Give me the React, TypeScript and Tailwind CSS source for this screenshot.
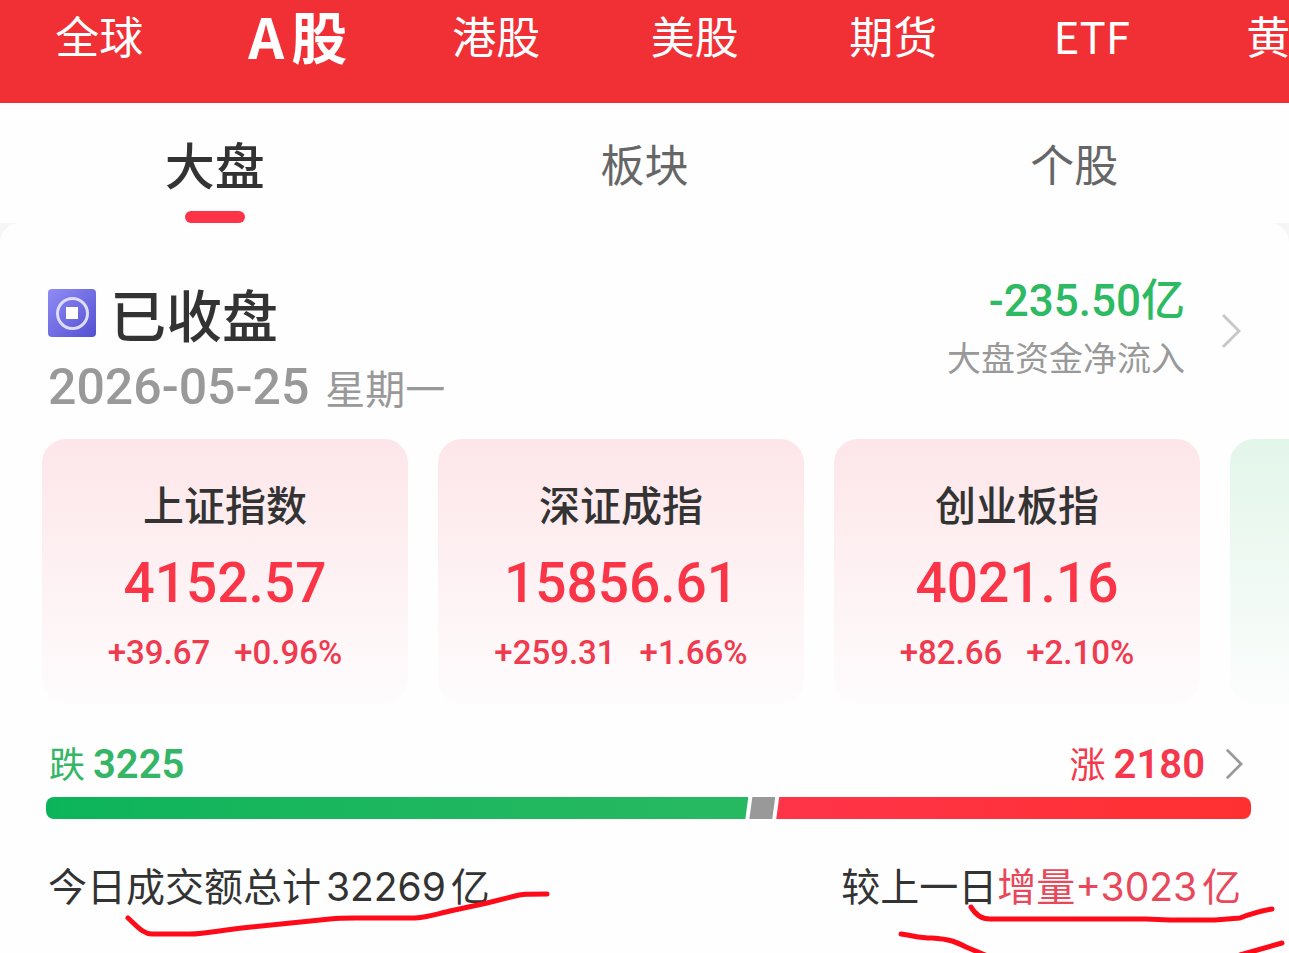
const markets = ['全球', 'A股', '港股', '美股', '期货', 'ETF', '黄金']
const sections = ['大盘', '板块', '个股']

const indices = [
  { name: '上证指数', value: '4152.57', change: '+39.67', percent: '+0.96%' },
  { name: '深证成指', value: '15856.61', change: '+259.31', percent: '+1.66%' },
  { name: '创业板指', value: '4021.16', change: '+82.66', percent: '+2.10%' },
]

const breadth = { down: 3225, flat: 119, up: 2180 }

export default function App() {
  return (
    <div className="relative min-h-screen overflow-hidden bg-[#f6f6f6] font-['Noto_Sans_CJK_SC',sans-serif] text-[#333] [text-autospace:normal]">
      <MarketNav />
      <SectionTabs />
      <main className="rounded-t-[20px] bg-[#fefefe] pt-14 pb-20">
        <Summary />
        <IndexCards />
        <Breadth />
        <Turnover />
      </main>
    </div>
  )
}

function MarketNav() {
  return (
    <nav className="flex overflow-hidden bg-[#f03035] pb-[33px] text-white">
      {markets.map((m) => (
        <button
          key={m}
          className={
            m === 'A股'
              ? 'h-[70px] w-[15.4%] shrink-0 text-[56px] leading-none font-bold whitespace-nowrap'
              : 'h-[70px] w-[15.4%] shrink-0 text-[44px] leading-none font-normal whitespace-nowrap'
          }
        >
          {m}
        </button>
      ))}
    </nav>
  )
}

function SectionTabs() {
  return (
    <nav className="grid grid-cols-3 bg-[#fefefe] pt-3">
      {sections.map((s, i) => (
        <button key={s} className="flex flex-col items-center">
          <span
            className={
              i === 0
                ? 'flex h-24 items-center text-[50px] font-medium'
                : 'flex h-24 items-center text-[44px] text-[#666]'
            }
          >
            {s}
          </span>
          {i === 0 && <span className="h-3 w-[60px] rounded-full bg-[#fd3447]" />}
        </button>
      ))}
    </nav>
  )
}

function Summary() {
  return (
    <section className="flex justify-between px-12">
      <div>
        <div className="flex h-[68px] items-center gap-3.5">
          <ClosedIcon />
          <h1 className="text-[56px] leading-[64px] font-medium">已收盘</h1>
        </div>
        <div className="mt-2 flex items-baseline gap-4 text-[#999]">
          <span className="font-[Roboto] text-[50px] leading-[64px] font-medium">2026-05-25</span>
          <span className="text-[40px] leading-[64px]">星期一</span>
        </div>
      </div>
      <a href="#flow" className="flex h-[104px] items-center gap-9">
        <span className="flex flex-col items-end">
          <span className="font-[Roboto,'Noto_Sans_CJK_SC'] text-[44px] leading-[52px] font-medium text-[#2dba62] [text-autospace:no-autospace]">
            -235.50亿
          </span>
          <span className="text-[34px] leading-[60px] text-[#999]">大盘资金净流入</span>
        </span>
        <Chevron className="h-9 w-5 text-[#c8c8c8]" />
      </a>
    </section>
  )
}

function IndexCards() {
  return (
    <section className="mt-5 flex gap-[30px] overflow-hidden pl-[42px]">
      {indices.map((x) => (
        <article
          key={x.name}
          className="flex h-[265px] w-[366px] shrink-0 flex-col items-center rounded-3xl bg-linear-to-b from-[#fde6e9] to-[#fefcfd] pt-9 text-[#fb3548]"
        >
          <h2 className="text-[41px] leading-[56px] font-medium text-[#333]">{x.name}</h2>
          <p className="mt-4 font-[Roboto] text-[55px] leading-[72px] font-medium">{x.value}</p>
          <p className="mt-2 flex gap-6 font-[Roboto] text-[33px] leading-[52px] font-medium text-[#ee3b4f]">
            <span>{x.change}</span>
            <span>{x.percent}</span>
          </p>
        </article>
      ))}
      <article className="h-[265px] w-[366px] shrink-0 rounded-3xl bg-linear-to-b from-[#e3f6ea] to-[#fcfdfd]" />
    </section>
  )
}

function Breadth() {
  return (
    <section className="mt-8 pr-[38px] pl-[46px]">
      <div className="flex h-[61px] items-center justify-between pr-2 pb-1.5 pl-[3px]">
        <p className="flex items-baseline gap-2 text-[36px] leading-[52px] text-[#35b566]">
          跌<span className="font-[Roboto] text-[40px] font-semibold">{breadth.down}</span>
        </p>
        <a href="#breadth" className="flex items-center gap-5 text-[#f5384b]">
          <span className="flex items-baseline gap-2 text-[36px] leading-[52px]">
            涨<span className="font-[Roboto] text-[40px] font-semibold">{breadth.up}</span>
          </span>
          <Chevron className="h-8 w-[18px] text-[#999]" />
        </a>
      </div>
      <div className="flex h-[22px] gap-px overflow-hidden rounded-lg">
        <div
          className="basis-0 bg-linear-to-r from-[#0bb45a] to-[#27b962] [clip-path:polygon(0_0,100%_0,calc(100%-3px)_100%,0_100%)]"
          style={{ flexGrow: breadth.down }}
        />
        <div
          className="basis-0 bg-[#999] [clip-path:polygon(3px_0,100%_0,calc(100%-3px)_100%,0_100%)]"
          style={{ flexGrow: breadth.flat }}
        />
        <div
          className="basis-0 bg-linear-to-r from-[#ff3448] to-[#ff3030] [clip-path:polygon(3px_0,100%_0,100%_100%,0_100%)]"
          style={{ flexGrow: breadth.up }}
        />
      </div>
    </section>
  )
}

function Turnover() {
  return (
    <section className="relative mt-10 flex justify-between px-12 font-[Inter,'Noto_Sans_CJK_SC'] text-[39px] leading-[56px]">
      <p>今日成交额总计32269亿</p>
      <p>
        较上一日<span className="text-[#e8485a]">增量+3023亿</span>
      </p>
      {/* red pen marks under both figures */}
      <svg
        className="pointer-events-none absolute top-0 left-0 h-24 w-[600px]"
        viewBox="0 859 600 96"
        fill="none"
        stroke="#ff0a18"
        strokeWidth="5"
        strokeLinecap="round"
        strokeLinejoin="round"
      >
        <path d="M128 918C137 926 143 934 152 934H190C205 934 222 930 242 928L330 919C340 918 345 918 355 918H415C430 917 440 913 450 911L487 903L515 896C523 894 525 894 547 894" />
      </svg>
      <svg
        className="pointer-events-none absolute top-0 right-0 h-24 w-[409px]"
        viewBox="880 859 409 96"
        fill="none"
        stroke="#ff0a18"
        strokeWidth="5"
        strokeLinecap="round"
        strokeLinejoin="round"
      >
        <path d="M971 907C975 914 980 919 990 919H1145L1170 920H1215L1240 918C1250 914 1256 912 1272 909" />
        <path d="M901 934C915 936 920 938 932 938C950 939 956 942 966 947L990 957M1240 955L1282 943" />
      </svg>
    </section>
  )
}

function ClosedIcon() {
  return (
    <svg className="size-12" viewBox="0 0 48 48" fill="none">
      <defs>
        <linearGradient id="closed" x1="0" y1="0" x2="48" y2="48" gradientUnits="userSpaceOnUse">
          <stop stopColor="#8f8cf6" />
          <stop offset="1" stopColor="#544fd0" />
        </linearGradient>
      </defs>
      <rect width="48" height="48" rx="4" fill="url(#closed)" />
      <circle cx="24.5" cy="24.5" r="15" stroke="#dedcfb" strokeWidth="3" />
      <rect x="18" y="18" width="12" height="12" fill="#fff" />
    </svg>
  )
}

function Chevron({ className }: { className: string }) {
  return (
    <svg className={className} viewBox="0 0 20 36" fill="none" stroke="currentColor" strokeWidth="3">
      <path d="M2 2L18 18L2 34" />
    </svg>
  )
}
